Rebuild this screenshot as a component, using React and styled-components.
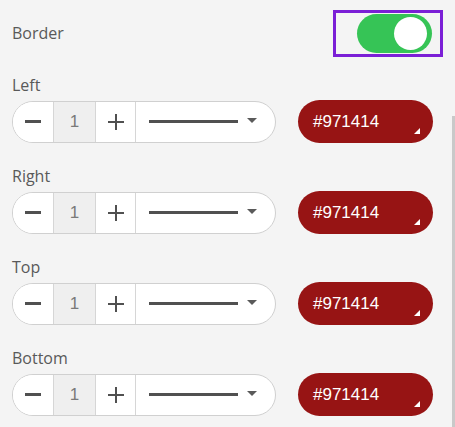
import React, { useState } from "react";
import styled, { createGlobalStyle } from "styled-components";

const Global = createGlobalStyle`
  html, body { margin: 0; padding: 0; background: #f4f4f4; }
  body { font-family: "Open Sans", "Noto Sans", sans-serif; }
`;

const Page = styled.div`
  display: flex;
  width: 455px;
  height: 427px;
  background: #f4f4f4;
  overflow: hidden;
`;

const Panel = styled.div`
  flex: 1;
  padding: 0 0 0 12px;
`;

const Track = styled.div`
  width: 3px;
  margin-top: 116px;
  background: #c9c9c9;
`;

const Header = styled.div`
  display: flex;
  align-items: center;
  justify-content: space-between;
  height: 66px;
  margin-bottom: 8px;
  padding-right: 9px;
`;

const Label = styled.div`
  font-size: 16px;
  line-height: 22px;
  color: #595959;
`;

const Highlight = styled.div`
  display: flex;
  align-items: center;
  justify-content: flex-end;
  width: 110px;
  height: 47px;
  border: 3px solid #7b1fd6;
  padding-right: 8px;
  box-sizing: border-box;
  margin-top: 1px;
`;

const Switch = styled.button`
  position: relative;
  width: 75px;
  height: 39px;
  border: none;
  border-radius: 20px;
  background: ${({ on }) => (on ? "#36c456" : "#cfcfcf")};
  padding: 0;
  cursor: pointer;
  &::after {
    content: "";
    position: absolute;
    top: 3px;
    left: ${({ on }) => (on ? "37px" : "3px")};
    width: 33px;
    height: 33px;
    border-radius: 50%;
    background: #fff;
  }
`;

const Group = styled.div`
  margin-bottom: 22px;
`;

const Row = styled.div`
  display: flex;
  align-items: center;
  margin-top: 4px;
`;

const Stepper = styled.div`
  display: flex;
  width: 264px;
  height: 42px;
  box-sizing: border-box;
  border: 1px solid #d0d0d0;
  border-radius: 21px;
  background: #fff;
  overflow: hidden;
`;

const Seg = styled.div`
  display: flex;
  align-items: center;
  justify-content: center;
  box-sizing: border-box;
  width: ${({ w }) => w}px;
  border-right: 1px solid #d6d6d6;
  background: ${({ shade }) => (shade ? "#efefef" : "#fff")};
  font-family: "Liberation Sans", Arial, sans-serif;
  font-size: 17px;
  color: #7a7a7a;
`;

const Bar = styled.span`
  display: block;
  width: ${({ w }) => w}px;
  height: 3px;
  background: #505050;
`;

const Plus = styled.span`
  position: relative;
  width: 16px;
  height: 16px;
  &::before, &::after {
    content: "";
    position: absolute;
    background: #505050;
  }
  &::before { left: 0; top: 7px; width: 16px; height: 2.5px; }
  &::after { left: 7px; top: 0; width: 2.5px; height: 16px; }
`;

const Select = styled.div`
  flex: 1;
  display: flex;
  align-items: center;
  padding: 0 18px 0 13px;
`;

const Caret = styled.span`
  margin-left: auto;
  width: 0;
  height: 0;
  border-left: 5px solid transparent;
  border-right: 5px solid transparent;
  border-top: 5px solid #5a5a5a;
  margin-top: -2px;
`;

const ColorButton = styled.div`
  position: relative;
  display: flex;
  align-items: center;
  width: 135px;
  height: 43px;
  margin-left: 22px;
  padding-left: 15px;
  box-sizing: border-box;
  border-radius: 22px;
  background: ${({ color }) => color};
  color: #fff;
  font-family: "Liberation Sans", Arial, sans-serif;
  font-size: 17px;
  &::after {
    content: "";
    position: absolute;
    right: 13px;
    bottom: 9px;
    width: 0;
    height: 0;
    border-left: 6px solid transparent;
    border-bottom: 6px solid #fff;
  }
`;

const sides = ["Left", "Right", "Top", "Bottom"];

export default function App() {
  const [on, setOn] = useState(true);
  return (
    <Page>
      <Global />
      <Panel>
        <Header>
          <Label>Border</Label>
          <Highlight>
            <Switch on={on ? 1 : 0} onClick={() => setOn(!on)} />
          </Highlight>
        </Header>
        {sides.map((s) => (
          <Group key={s}>
            <Label>{s}</Label>
            <Row>
              <Stepper>
                <Seg w={41}><Bar w={16} /></Seg>
                <Seg w={42} shade>1</Seg>
                <Seg w={40}><Plus /></Seg>
                <Select>
                  <Bar w={89} />
                  <Caret />
                </Select>
              </Stepper>
              <ColorButton color="#971414">#971414</ColorButton>
            </Row>
          </Group>
        ))}
      </Panel>
      <Track />
    </Page>
  );
}
